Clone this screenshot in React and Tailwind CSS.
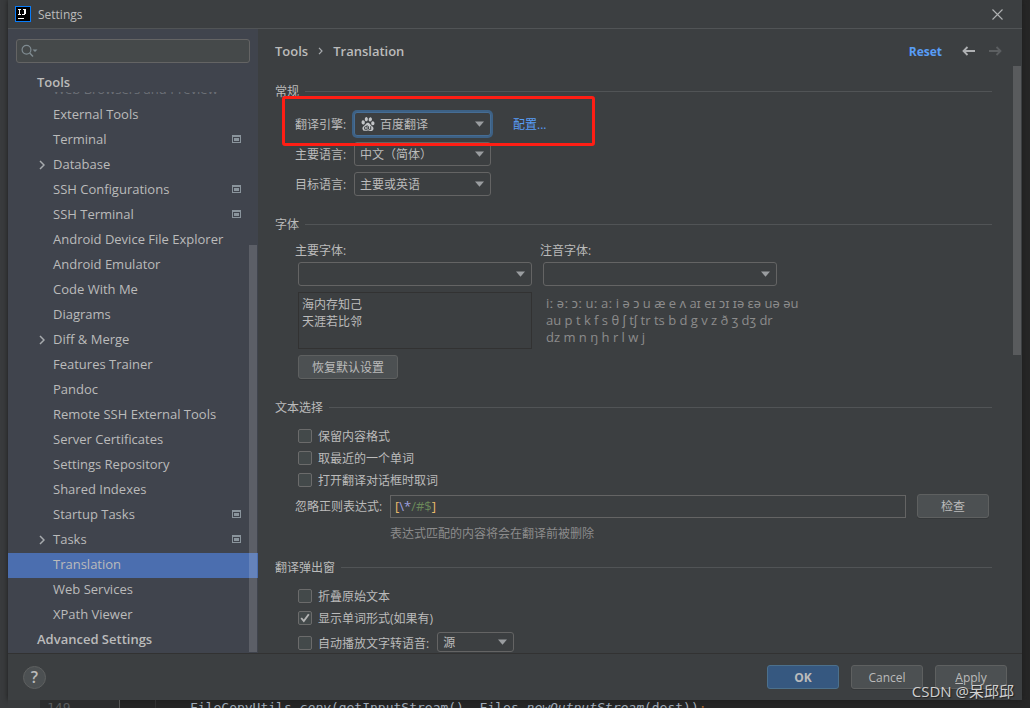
import React from "react";
import { SiBaidu } from "react-icons/si";

const TREE = [
  { label: "Web Browsers and Preview", faded: true },
  { label: "External Tools" },
  { label: "Terminal", project: true },
  { label: "Database", branch: true },
  { label: "SSH Configurations", project: true },
  { label: "SSH Terminal", project: true },
  { label: "Android Device File Explorer" },
  { label: "Android Emulator" },
  { label: "Code With Me" },
  { label: "Diagrams" },
  { label: "Diff & Merge", branch: true },
  { label: "Features Trainer" },
  { label: "Pandoc" },
  { label: "Remote SSH External Tools" },
  { label: "Server Certificates" },
  { label: "Settings Repository" },
  { label: "Shared Indexes" },
  { label: "Startup Tasks", project: true },
  { label: "Tasks", branch: true, project: true },
  { label: "Translation", selected: true },
  { label: "Web Services" },
  { label: "XPath Viewer" },
];

function Logo() {
  return (
    <svg width="16" height="16" viewBox="0 0 16 16" aria-hidden="true" shapeRendering="crispEdges">
      <rect width="16" height="16" fill="#087cfa" />
      <rect x="1" y="1" width="14" height="14" fill="#000" />
      <path d="M3 3h3v1H5v4h1v1H3V8h1V4H3zM8 3h3v5h-1v1H7V8h2V4H8zM3 12h6v1H3z" fill="#fff" />
    </svg>
  );
}

function ProjectIcon() {
  return (
    <svg className="mb-[2px]" width="9" height="8" viewBox="0 0 9 8" aria-hidden="true" shapeRendering="crispEdges">
      <path d="M0 0h9v8H0zM1 2v5h7V2z" fillRule="evenodd" fill="#8a949c" />
      <rect x="2" y="3" width="5" height="3" fill="#8a949c" />
    </svg>
  );
}

function Chevron() {
  return (
    <svg width="6" height="10" viewBox="0 0 6 10" aria-hidden="true">
      <path d="M1 1l4 4-4 4" fill="none" stroke="#a7abae" strokeWidth="1.5" />
    </svg>
  );
}

function Combo({ id, label, value, className, icon, focused }) {
  return (
    <div className={"relative " + className}>
      <select
        id={id}
        aria-label={label}
        className={
          "block h-full w-full appearance-none rounded-[3px] border bg-[#3c3f41] pr-6 pt-[2px] text-[12px] text-[#bbbbbb] outline-none " +
          (focused ? "border-[#466d94] ring-2 ring-[#3d6185] " : "border-[#646464] ") +
          (icon ? "pl-[25px]" : "pl-[5px]")
        }
      >
        <option>{value}</option>
      </select>
      {icon && <span className="pointer-events-none absolute inset-y-0 left-[7px] flex items-center">{icon}</span>}
      <span className="pointer-events-none absolute inset-y-0 right-[6px] flex items-center">
        <svg width="10" height="6" viewBox="0 0 10 6" aria-hidden="true">
          <path d="M0 0.5h9L4.5 5.7z" fill="#9a9da0" />
        </svg>
      </span>
    </div>
  );
}

function Section({ title, children, className }) {
  return (
    <section className={className}>
      <div className="flex h-4 items-center gap-[6px]">
        <h2 className="whitespace-nowrap pt-[2px]">{title}</h2>
        <div className="h-px flex-1 bg-[#515456]" />
      </div>
      {children}
    </section>
  );
}

function Check({ id, label, checked }) {
  return (
    <div className="flex h-[14px] items-center gap-[6px]">
      <span className="relative flex size-[14px]">
        <input
          id={id}
          type="checkbox"
          defaultChecked={checked}
          className="peer size-[14px] appearance-none rounded-[2px] border border-[#6b6b6b] bg-[#43494a]"
        />
        <svg
          className="pointer-events-none absolute inset-0 hidden peer-checked:block"
          width="14"
          height="14"
          viewBox="0 0 14 14"
          aria-hidden="true"
        >
          <path d="M3.2 7l2.6 3L10.8 3.2" fill="none" stroke="#b4b4b4" strokeWidth="1.9" />
        </svg>
      </span>
      <label htmlFor={id} className="whitespace-nowrap pt-[2px]">{label}</label>
    </div>
  );
}

const plain =
  "h-6 rounded-[3px] border border-[#5e6060] bg-[#4c5052] pt-px text-center text-[#bbbbbb] shadow-[0_1px_0_#35383a]";

export default function App() {
  return (
    <div className="relative flex h-screen flex-col overflow-hidden bg-[#262626] px-2 font-['Open_Sans','Noto_Sans','Noto_Sans_CJK_SC',sans-serif] text-[12px] leading-4 text-[#bbbbbb] [background-image:linear-gradient(to_right,#393b3d_8px,transparent_8px)]">
      <div className="flex min-h-0 flex-1 flex-col bg-[#3c3f41] shadow-[0_0_5px_#1c1c1c]">
        <header className="flex h-[29px] shrink-0 items-center border-b border-[#515456] pl-[7px] pr-[19px]">
          <Logo />
          <h1 className="ml-[7px] flex-1 pt-px text-[12px]">Settings</h1>
          <button aria-label="Close">
            <svg width="11" height="11" viewBox="0 0 11 11" aria-hidden="true">
              <path d="M0.5 0.5l10 10M10.5 0.5l-10 10" stroke="#b0b2b3" strokeWidth="1.1" />
            </svg>
          </button>
        </header>

        <div className="flex min-h-0 flex-1">
          <aside className="relative flex w-[250px] shrink-0 flex-col bg-[#40444d]">
            <div className="relative mx-2 mt-[10px]">
              <input
                type="text"
                aria-label="Search settings"
                className="block h-6 w-full rounded-[3px] border border-[#646464] bg-[#45494a] pl-7 outline-none"
              />
              <svg
                className="pointer-events-none absolute left-[5px] top-[5px]"
                width="17"
                height="14"
                viewBox="0 0 17 14"
                aria-hidden="true"
              >
                <circle cx="5.5" cy="5.8" r="4.4" fill="none" stroke="#7f8b91" strokeWidth="1.2" />
                <path d="M8.7 9l3.3 3.4" stroke="#7f8b91" strokeWidth="1.5" />
                <path d="M11.5 5.5h5l-2.5 2.6z" fill="#7f8b91" />
              </svg>
            </div>
            <div className="flex h-[29px] shrink-0 items-center pl-[29px] pt-2 text-[13px] font-semibold">Tools</div>
            <nav className="min-h-0 flex-1 overflow-hidden">
              <ul className="-mt-[14px]">
                {TREE.map((n) => (
                  <li key={n.label}>
                    <a
                      href="#"
                      className={
                        "flex h-[25px] items-center pb-[2px] pl-[29px] pr-[17px] text-[13px] " +
                        (n.selected ? "bg-[#4b6eaf]" : n.faded ? "text-[#6c7077]" : "")
                      }
                    >
                      <span className="flex w-4 items-center pl-[2px]">{n.branch && <Chevron />}</span>
                      <span className="flex-1 whitespace-nowrap pb-[2px]">{n.label}</span>
                      {n.project && <ProjectIcon />}
                    </a>
                  </li>
                ))}
                <li>
                  <a href="#" className="flex h-[25px] items-center pb-1 pl-[29px] text-[13px] font-semibold">
                    Advanced Settings
                  </a>
                </li>
              </ul>
            </nav>
            <div className="absolute bottom-px right-px h-[407px] w-2 bg-white/15" />
          </aside>

          <main className="relative flex min-w-0 flex-1 flex-col overflow-hidden pl-[17px] pr-[30px]">
            <div className="-mr-[10px] flex h-[45px] shrink-0 items-center pb-px text-[13px] font-semibold">
              <span>Tools</span>
              <svg className="mx-[10px]" width="5" height="8" viewBox="0 0 5 8" aria-hidden="true">
                <path d="M1 0.8L4 4 1 7.2" fill="none" stroke="#a7abae" strokeWidth="1.2" />
              </svg>
              <span className="flex-1">Translation</span>
              <a href="#" className="pt-px text-[12px] font-bold text-[#589df6]">Reset</a>
              <button aria-label="Back" className="ml-5">
                <svg width="13" height="10" viewBox="0 0 13 10" aria-hidden="true">
                  <path d="M13 5H1.5M5.5 1l-4 4 4 4" fill="none" stroke="#afb1b3" strokeWidth="1.8" />
                </svg>
              </button>
              <button aria-label="Forward" disabled className="ml-[14px]">
                <svg width="13" height="10" viewBox="0 0 13 10" aria-hidden="true">
                  <path d="M0 5h11.5M7.5 1l4 4-4 4" fill="none" stroke="#5c5f61" strokeWidth="1.8" />
                </svg>
              </button>
            </div>
            <div className="absolute right-px top-[37px] h-[289px] w-2 bg-[#595b5d]" />

            <Section title="常规" className="mt-[9px]">
              <div className="mt-[13px] grid grid-cols-[59px_137px_auto] gap-y-[6px] pl-5">
                <label htmlFor="engine" className="self-center whitespace-nowrap pt-[2px]">翻译引擎:</label>
                <Combo id="engine" value="百度翻译" focused icon={<SiBaidu size={14} color="#c4c6c8" />} className="h-6" />
                <a href="#" className="ml-[22px] self-center pt-[2px] text-[#589df6]">配置...</a>
                <label htmlFor="primary" className="self-center whitespace-nowrap pt-[2px]">主要语言:</label>
                <Combo id="primary" value="中文（简体）" className="h-6" />
                <span />
                <label htmlFor="target" className="self-center whitespace-nowrap pt-[2px]">目标语言:</label>
                <Combo id="target" value="主要或英语" className="h-6" />
              </div>
            </Section>

            <Section title="字体" className="mt-5">
              <div className="mt-[11px] flex gap-[11px] pl-[23px]">
                <div className="w-[234px]">
                  <label htmlFor="font1" className="-ml-[3px] block">主要字体:</label>
                  <Combo id="font1" value="" className="mt-[3px] h-6" />
                  <textarea
                    aria-label="主要字体预览"
                    readOnly
                    defaultValue={"海内存知己\n天涯若比邻"}
                    className="mt-[6px] block h-[57px] w-full resize-none border border-[#323232] px-[3px] py-[3px] leading-[17px] outline-none"
                  />
                  <button className={plain + " mt-[6px] w-[100px]"}>恢复默认设置</button>
                </div>
                <div className="w-[260px]">
                  <label htmlFor="font2" className="-ml-[3px] block">注音字体:</label>
                  <Combo id="font2" value="" className="mt-[3px] h-6 w-[234px]" />
                  <p className="mt-[9px] whitespace-nowrap pl-[3px] text-[13px] leading-[17px] text-[#8c8c8c]">
                    iː əː ɔː uː aː i ə ɔ u æ e ʌ aɪ eɪ ɔɪ ɪə ɛə uə əu
                    <br />
                    au p t k f s θ ʃ tʃ tr ts b d g v z ð ʒ dʒ dr
                    <br />
                    dz m n ŋ h r l w j
                  </p>
                </div>
              </div>
            </Section>

            <Section title="文本选择" className="mt-5">
              <div className="mt-[14px] flex flex-col gap-2 pl-[23px]">
                <Check id="keep" label="保留内容格式" />
                <Check id="nearest" label="取最近的一个单词" />
                <Check id="take" label="打开翻译对话框时取词" />
              </div>
              <div className="mt-[7px] flex items-center pl-5 pr-[3px]">
                <label htmlFor="regex" className="w-[95px] whitespace-nowrap pt-[2px]">忽略正则表达式:</label>
                <div className="relative flex-1">
                  <input
                    id="regex"
                    type="text"
                    defaultValue="[\*/#$]"
                    className="block h-[23px] w-full border border-[#646464] px-1 text-[13px] text-transparent caret-[#bbbbbb] outline-none"
                  />
                  <span
                    aria-hidden="true"
                    className="pointer-events-none absolute inset-y-0 left-[5px] flex items-center text-[13px] text-[#6a8759]"
                  >
                    <span className="text-[#e8ba6a]">[</span>
                    <span className="text-[#9c9ede]">\*</span>
                    <span>/#$</span>
                    <span className="text-[#e8ba6a]">]</span>
                  </span>
                </div>
                <button className={plain + " ml-[11px] w-[72px]"}>检查</button>
              </div>
              <p className="mt-2 pl-[115px] text-[#8c8c8c]">表达式匹配的内容将会在翻译前被删除</p>
            </Section>

            <Section title="翻译弹出窗" className="mt-[17px]">
              <div className="mt-[14px] flex flex-col gap-2 pl-[23px]">
                <Check id="fold" label="折叠原始文本" />
                <Check id="forms" label="显示单词形式(如果有)" checked />
              </div>
              <div className="mt-[7px] flex items-end gap-2 pl-[23px]">
                <div className="pb-[2px]">
                  <Check id="tts" label="自动播放文字转语音:" />
                </div>
                <Combo id="source" label="自动播放文字转语音" value="源" className="h-5 w-[77px]" />
              </div>
            </Section>
          </main>
        </div>

        <footer className="flex h-[47px] shrink-0 items-center gap-3 border-t border-[#323232] px-[15px]">
          <button
            aria-label="Help"
            className="flex size-[23px] items-center justify-center rounded-full border border-[#5e6060] bg-[#4c5052] text-[16px] font-semibold"
          >
            ?
          </button>
          <span className="flex-1" />
          <button className="h-6 w-[72px] rounded-[3px] border border-[#4c708c] bg-[#365880] pt-px text-[12px] font-bold">OK</button>
          <button className={plain + " w-[72px]"}>Cancel</button>
          <button className={plain + " w-[72px]"}>
            <span className="underline">A</span>pply
          </button>
        </footer>
      </div>

      <div className="flex h-2 shrink-0 overflow-hidden font-['DejaVu_Sans_Mono',monospace] text-[13px] leading-4 text-[#a0abb8]">
        <div className="w-8 shrink-0 bg-[#393b3d]" />
        <div className="w-20 shrink-0 border-r border-[#555555] bg-[#2b2c2d] pl-[7px] text-[#5a5c5e]">149</div>
        <div className="w-9 shrink-0 border-r border-[#333333]" />
        <pre className="pl-[34px] font-[inherit]">
          FileCopyUtils.<i>copy</i>(getInputStream(), Files.<i>newOutputStream</i>(dest))<span className="text-[#a8662c]">;</span>
        </pre>
      </div>

      <div className="pointer-events-none absolute bottom-[9px] right-4 text-[15px] text-[#d0d0d0] [text-shadow:1px_1px_1px_#222]">
        CSDN @呆邱邱
      </div>
      <div className="pointer-events-none absolute left-[282px] top-24 h-[50px] w-[313px] rounded-[3px] border-3 border-[#ff1e14]" />
    </div>
  );
}
